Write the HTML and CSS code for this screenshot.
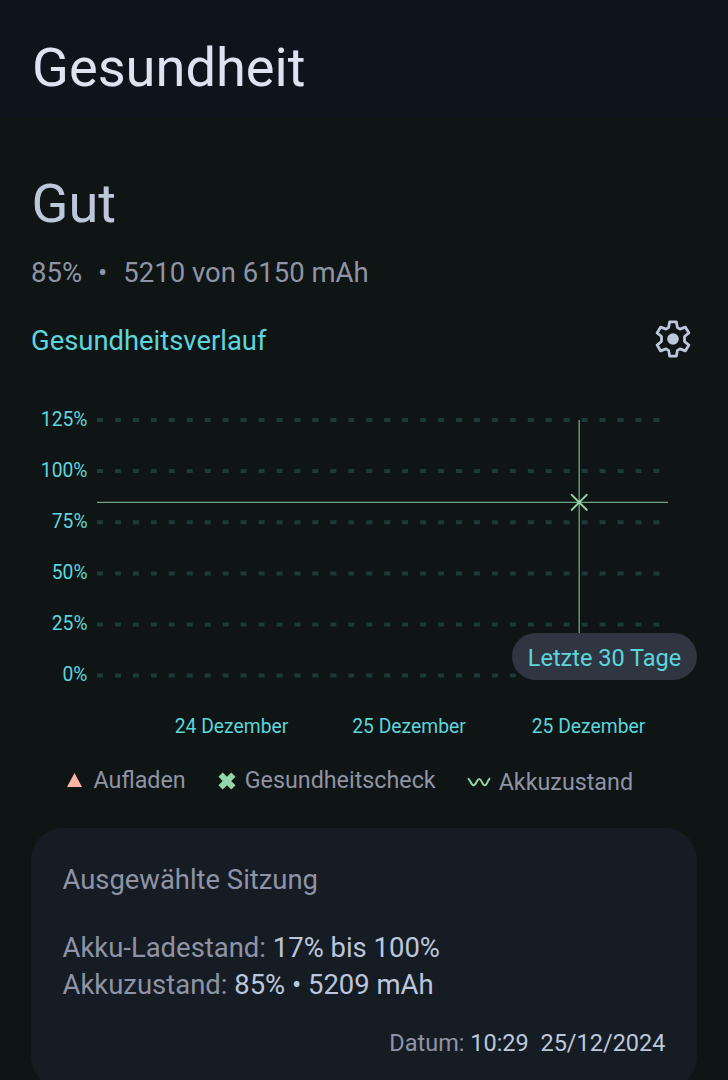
FILE: index.html
```html
<!DOCTYPE html>
<html lang="de">
<head>
    <meta charset="UTF-8">
    <title>Gesundheit</title>
    <link rel="stylesheet" href="styles.css">
</head>
<body>
    <header class="header">
        <h1>Gesundheit</h1>
    </header>

    <main class="content">
        <h2 class="status">Gut</h2>
        <p class="capacity">85% <span class="dot">•</span> 5210 von 6150 mAh</p>

        <div class="section-row">
            <h3>Gesundheitsverlauf</h3>
            <svg class="gear" viewBox="0 0 36 38" width="36" height="38">
                <path d="M14.7 1.8h6.6l1.1 5.8 2.6 1.5 5.3-2 3.6 5.8-4.4 3.6v5l4.4 3.6-3.6 5.8-5.3-2-2.6 1.5-1.1 5.8h-6.6l-1.1-5.8-2.6-1.5-5.3 2-3.6-5.8 4.4-3.6v-5l-4.4-3.6 3.6-5.8 5.3 2 2.6-1.5z"/>
                <circle cx="18" cy="19" r="5.8"/>
            </svg>
        </div>

        <div class="chart">
            <svg viewBox="0 0 728 350" width="728" height="350">
                <g class="grid">
                    <path d="M97 20H660"/>
                    <path d="M97 71H660"/>
                    <path d="M97 122.3H660"/>
                    <path d="M97 173.4H660"/>
                    <path d="M97 224.5H660"/>
                    <path d="M97 275.5H660"/>
                </g>
                <g class="y-labels">
                    <text x="87.5" y="25.5">125%</text>
                    <text x="87.5" y="76.8">100%</text>
                    <text x="87.5" y="128">75%</text>
                    <text x="87.5" y="179">50%</text>
                    <text x="87.5" y="230">25%</text>
                    <text x="87.5" y="281">0%</text>
                </g>
                <g class="x-labels">
                    <text x="231.5" y="333">24 Dezember</text>
                    <text x="409" y="333">25 Dezember</text>
                    <text x="588.5" y="333">25 Dezember</text>
                </g>
                <path class="cursor" d="M97 102.4H668M579.2 20V275"/>
                <path class="marker" d="M571.7 94.9l15 15M586.7 94.9l-15 15"/>
            </svg>
            <div class="range">Letzte 30 Tage</div>
        </div>

        <div class="legend">
            <div class="legend-item">
                <svg class="icon-charge" width="15" height="14" viewBox="0 0 15 14"><path d="M7.5 0L15 14H0z"/></svg>
                <span>Aufladen</span>
            </div>
            <div class="legend-item check">
                <svg class="icon-check" width="18" height="18" viewBox="0 0 18 18"><path d="M2.6 2.6l12.8 12.8M15.4 2.6L2.6 15.4"/></svg>
                <span>Gesundheitscheck</span>
            </div>
            <div class="legend-item state">
                <svg class="icon-state" width="24" height="10" viewBox="0 0 24 10"><path d="M.7 1.6C3.2 1.6 3.8 8.2 6.6 8.2S9.6 2 12.2 2s2.9 6.2 5.6 6.2S20.8 1.6 23.3 1.6"/></svg>
                <span>Akkuzustand</span>
            </div>
        </div>

        <section class="card">
            <h4>Ausgewählte Sitzung</h4>
            <p>Akku-Ladestand: <b>17% bis 100%</b></p>
            <p>Akkuzustand: <b>85% • 5209 mAh</b></p>
            <p class="date">Datum: <b>10:29 &nbsp;25/12/2024</b></p>
        </section>
    </main>
</body>
</html>
```

FILE: styles.css
```css
* {
    box-sizing: border-box;
}
body {
    margin: 0;
    height: 1080px;
    overflow: hidden;
    background: #0f1514;
    color: #8e94a6;
    font-family: Roboto, sans-serif;
}
h1, h2, h3, h4, p {
    margin: 0;
    font-weight: 400;
}
.header {
    height: 118px;
    padding: 36px 32px 0;
    background: #0d141c;
}
h1, .status {
    font-size: 54.2px;
    line-height: 64px;
    color: #dde3f0;
}
.content {
    padding: 54px 31px 0;
}
.status {
    padding-left: 0.5px;
    color: #bcc7dc;
}
.capacity {
    margin-top: 19px;
    font-size: 27.5px;
    line-height: 36px;
}
.dot {
    margin: 0 9.2px;
}
.section-row {
    display: flex;
    justify-content: space-between;
    align-items: center;
    height: 36px;
    margin-top: 32px;
    padding-right: 5px;
}
.section-row h3 {
    font-size: 27.4px;
    line-height: 36px;
    color: #5dd5dd;
}
.gear {
    margin: 0 0.6px 4px 0;
}
.gear path {
    fill: none;
    stroke: #bcc7dc;
    stroke-width: 2.8;
    stroke-linejoin: round;
}
.gear circle {
    fill: #bcc7dc;
}

/* chart */
.chart {
    position: relative;
    height: 350px;
    margin: 41px -31px 0;
}
.chart svg {
    display: block;
}
.chart text {
    font-size: 19.3px;
    fill: #5dd5dd;
}
.y-labels {
    text-anchor: end;
}
.x-labels {
    text-anchor: middle;
}
.grid path {
    stroke: #1d3938;
    stroke-width: 4;
    stroke-dasharray: 6 11.95;
}
.cursor {
    fill: none;
    stroke: #72a585;
    stroke-width: 1.3;
}
.marker {
    fill: none;
    stroke: #92d6a9;
    stroke-width: 2;
    stroke-linecap: round;
}
.range {
    position: absolute;
    top: 233px;
    right: 31px;
    width: 185px;
    height: 47px;
    border-radius: 24px;
    background: #2f3541;
    color: #5dd5dd;
    font-size: 23.5px;
    line-height: 50px;
    text-align: center;
}

/* legend */
.legend {
    display: flex;
    height: 78px;
    padding: 14px 0 0 35.5px;
    font-size: 23.3px;
    line-height: 32px;
}
.legend-item {
    display: flex;
    align-items: center;
    height: 32px;
}
.icon-charge {
    margin-right: 12px;
    fill: #ffb4a6;
}
.check {
    margin-left: 32.5px;
}
.icon-check {
    margin: 2px 8.5px 0 0;
    stroke: #92d6a9;
    stroke-width: 6;
}
.state {
    margin: 2px 0 0 31px;
}
.icon-state {
    margin-right: 8px;
    fill: none;
    stroke: #92d6a9;
    stroke-width: 2;
}

/* selected session */
.card {
    height: 260px;
    padding: 34px 31.5px 0;
    border-radius: 32px;
    background: #161c24;
    font-size: 27.45px;
    line-height: 37px;
}
.card h4 {
    margin-bottom: 31px;
    font-size: 27.4px;
}
.card b {
    font-weight: 400;
    color: #bcc7dc;
}
.card .date {
    margin-top: 21px;
    font-size: 23.5px;
    text-align: right;
}
```
